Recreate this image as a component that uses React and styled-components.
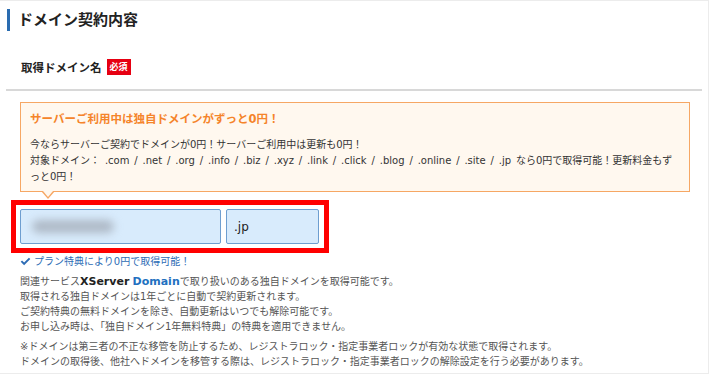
import styled, { createGlobalStyle } from "styled-components";

const GlobalStyle = createGlobalStyle`
  body {
    margin: 0;
    background: #fff;
    font-family: "DejaVu Sans", "Noto Sans CJK JP", sans-serif;
    color: #333;
  }
`;

const Page = styled.div`
  box-sizing: border-box;
  width: 709px;
  height: 374px;
  border: 1px solid #ececec;
  border-left: none;
  padding-top: 8px;
  overflow: hidden;
`;

const SectionTitle = styled.h2`
  margin: 0 0 0 7px;
  border-left: 3px solid #2a6cb0;
  padding-left: 8px;
  height: 22px;
  line-height: 22px;
  font-size: 15px;
  font-weight: bold;
  color: #222;
`;

const FieldRow = styled.div`
  display: flex;
  align-items: center;
  gap: 5px;
  margin-top: 28px;
  padding-left: 21px;
  height: 16px;
`;

const FieldLabel = styled.span`
  font-size: 11.5px;
  font-weight: bold;
  color: #222;
`;

const Badge = styled.span`
  background: #e60012;
  color: #fff;
  font-size: 9px;
  font-weight: bold;
  line-height: 16px;
  padding: 0 3px;
`;

const Divider = styled.div`
  margin: 14px 6px 0 6px;
  height: 2px;
  background: #d8d8d8;
`;

const Content = styled.div`
  padding: 0 18px 0 20px;
  margin-top: 11px;
`;

const Notice = styled.div`
  position: relative;
  width: 670px;
  box-sizing: border-box;
  border: 1.5px solid #f6a764;
  background: #fff8ef;
  padding: 7px 9px 6px 9px;

  &::before,
  &::after {
    content: "";
    position: absolute;
    left: 20px;
    border-style: solid;
    border-color: transparent;
  }
  &::before {
    bottom: -8px;
    border-width: 8px 7px 0 7px;
    border-top-color: #f6a764;
  }
  &::after {
    bottom: -6px;
    left: 21.5px;
    border-width: 6.5px 5.5px 0 5.5px;
    border-top-color: #fff8ef;
  }
`;

const NoticeTitle = styled.div`
  color: #f5842a;
  font-size: 11.5px;
  font-weight: bold;
  line-height: 18px;
`;

const NoticeBody = styled.p`
  margin: 9px 0 0 0;
  font-size: 10px;
  line-height: 16px;
  word-spacing: 1.7px;
  color: #333;
`;

const Highlight = styled.div`
  display: flex;
  gap: 5px;
  width: 318px;
  box-sizing: border-box;
  margin: 8px 0 0 -9px;
  border: 5px solid #ff0000;
  padding: 4px;
`;

const DomainField = styled.div`
  display: flex;
  align-items: center;
  box-sizing: border-box;
  width: ${(p) => p.$width}px;
  height: 35px;
  background: #d8ebfc;
  border: 1px solid #6e9ed0;
  border-radius: 2px;
  padding-left: 7px;
  font-size: 12px;
  color: #222;
  overflow: hidden;
`;

const Blurred = styled.span`
  display: block;
  width: 82px;
  height: 13px;
  margin-left: 4px;
  border-radius: 7px;
  background: #aeb9c6;
  filter: blur(4px);
`;

const CheckNote = styled.div`
  display: flex;
  align-items: center;
  gap: 3px;
  margin-top: 1px;
  font-size: 10px;
  line-height: 15px;
  color: #2d6cb5;

  svg {
    width: 11px;
    height: 11px;
  }
`;

const Notes = styled.p`
  margin: 5px 0 0 0;
  font-size: 10px;
  line-height: 15px;
  color: #555;
`;

const Brand = styled.b`
  font-size: 11px;
  color: ${(p) => (p.$blue ? "#2270c0" : "#222")};
`;

export default function App() {
  return (
    <Page>
      <GlobalStyle />
      <SectionTitle>ドメイン契約内容</SectionTitle>
      <FieldRow>
        <FieldLabel>取得ドメイン名</FieldLabel>
        <Badge>必須</Badge>
      </FieldRow>
      <Divider />
      <Content>
        <Notice>
          <NoticeTitle>サーバーご利用中は独自ドメインがずっと0円！</NoticeTitle>
          <NoticeBody>
            今ならサーバーご契約でドメインが0円！サーバーご利用中は更新も0円！
            <br />
            対象ドメイン： .com / .net / .org / .info / .biz / .xyz / .link / .click / .blog / .online / .site / .jp なら0円で取得可能！更新料金もずっと0円！
          </NoticeBody>
        </Notice>
        <Highlight>
          <DomainField $width={201}>
            <Blurred />
          </DomainField>
          <DomainField $width={93}>.jp</DomainField>
        </Highlight>
        <CheckNote>
          <svg viewBox="0 0 16 16" fill="#2d6cb5">
            <path d="M1 8.5l2-2 3 3L13 2.5l2 2-9 9z" />
          </svg>
          プラン特典により0円で取得可能！
        </CheckNote>
        <Notes>
          関連サービス<Brand>XServer</Brand> <Brand $blue>Domain</Brand>で取り扱いのある独自ドメインを取得可能です。
          <br />
          取得される独自ドメインは1年ごとに自動で契約更新されます。
          <br />
          ご契約特典の無料ドメインを除き、自動更新はいつでも解除可能です。
          <br />
          お申し込み時は、「独自ドメイン1年無料特典」の特典を適用できません。
        </Notes>
        <Notes>
          ※ドメインは第三者の不正な移管を防止するため、レジストラロック・指定事業者ロックが有効な状態で取得されます。
          <br />
          ドメインの取得後、他社へドメインを移管する際は、レジストラロック・指定事業者ロックの解除設定を行う必要があります。
        </Notes>
      </Content>
    </Page>
  );
}
